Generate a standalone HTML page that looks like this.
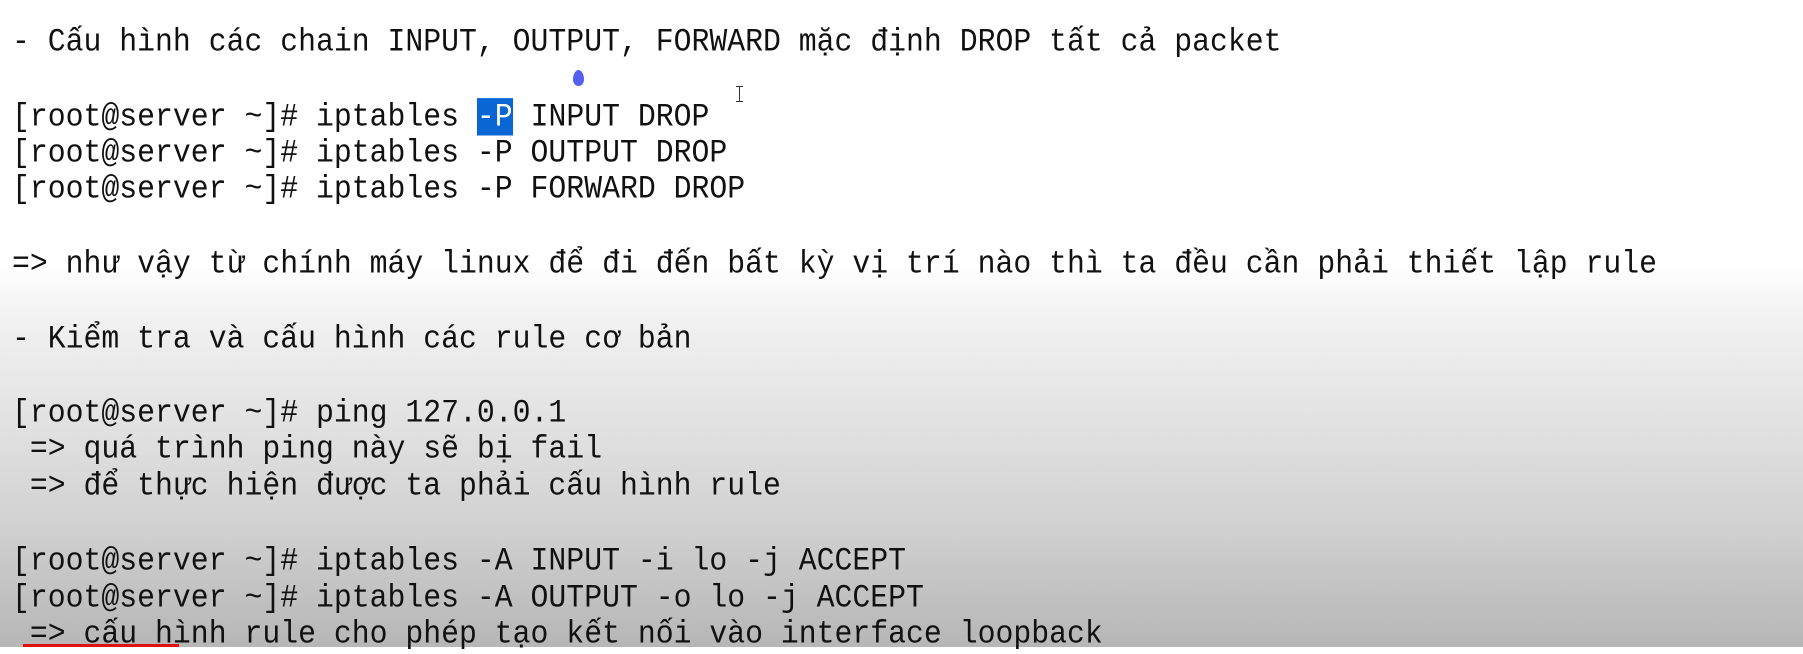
<!DOCTYPE html>
<html><head><meta charset="utf-8"><style>
html,body{margin:0;padding:0;}
body{width:1803px;height:647px;overflow:hidden;position:relative;
background:linear-gradient(to bottom,#fff 0px,#fff 265px,#f0f0f0 325px,#e2e2e2 420px,#d2d2d2 520px,#b6b6b6 647px);
font-family:"Liberation Mono","DejaVu Sans Mono",monospace;font-size:29.8px;color:#111;}
.l{position:absolute;left:12px;white-space:pre;line-height:36px;height:36px;transform:scaleY(1.1);transform-origin:50% 55%;}
.sel{background:#0a66d2;color:#fff;}
</style></head><body>
<div class="l" style="top:24px">- Cấu hình các chain INPUT, OUTPUT, FORWARD mặc định DROP tất cả packet</div>
<div class="l" style="top:99px">[root@server ~]# iptables <span class="sel">-P</span> INPUT DROP</div>
<div class="l" style="top:135px">[root@server ~]# iptables -P OUTPUT DROP</div>
<div class="l" style="top:171px">[root@server ~]# iptables -P FORWARD DROP</div>
<div class="l" style="top:246px">=> như vậy từ chính máy linux để đi đến bất kỳ vị trí nào thì ta đều cần phải thiết lập rule</div>
<div class="l" style="top:321px">- Kiểm tra và cấu hình các rule cơ bản</div>
<div class="l" style="top:395px">[root@server ~]# ping 127.0.0.1</div>
<div class="l" style="top:431px"> => quá trình ping này sẽ bị fail</div>
<div class="l" style="top:468px"> => để thực hiện được ta phải cấu hình rule</div>
<div class="l" style="top:543px">[root@server ~]# iptables -A INPUT -i lo -j ACCEPT</div>
<div class="l" style="top:580px">[root@server ~]# iptables -A OUTPUT -o lo -j ACCEPT</div>
<div class="l" style="top:616px"> => cấu hình rule cho phép tạo kết nối vào interface loopback</div>
<div style="position:absolute;left:573px;top:70px;width:11px;height:16px;background:#5560f0;border-radius:50% 50% 50% 50%/60% 60% 40% 40%;"></div>
<div style="position:absolute;left:739px;top:86px;width:1px;height:16px;background:#333;"></div>
<div style="position:absolute;left:736px;top:86px;width:7px;height:1px;background:#333;"></div>
<div style="position:absolute;left:736px;top:101px;width:7px;height:1px;background:#333;"></div>
<div style="position:absolute;left:23px;top:644px;width:156px;height:3px;background:#e01010;"></div>
</body></html>
